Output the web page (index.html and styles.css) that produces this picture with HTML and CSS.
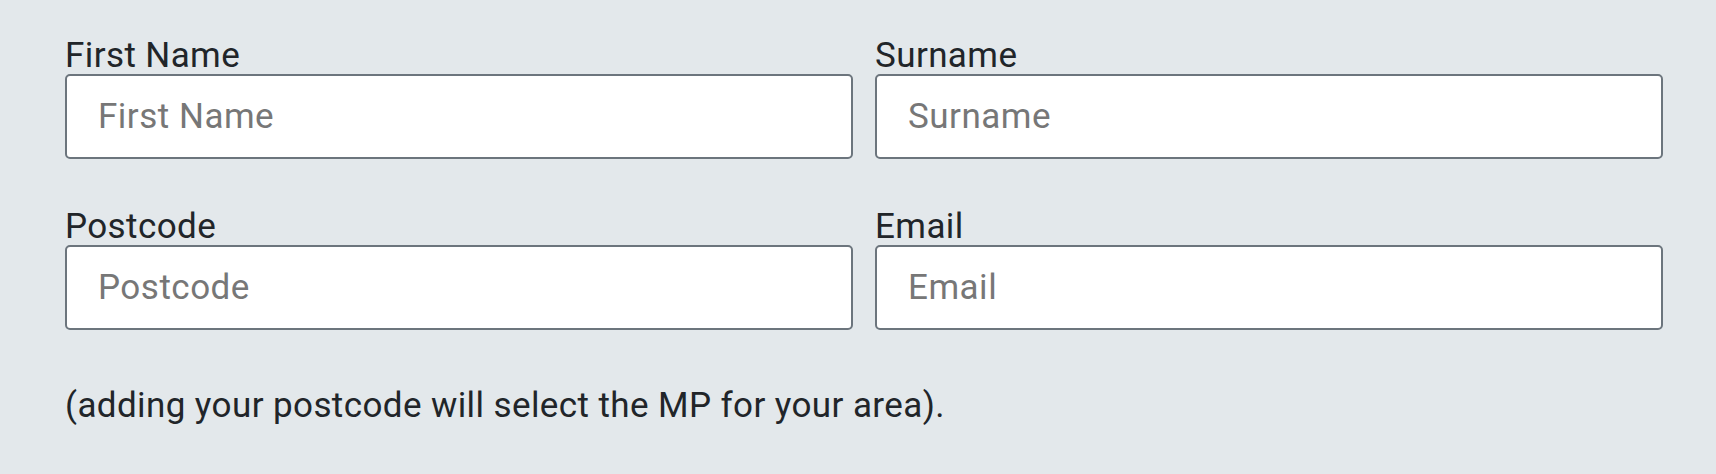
FILE: index.html
```html
<!DOCTYPE html>
<html>
<head>
  <title>Contact your MP</title>
  <link rel="stylesheet" href="styles.css">
</head>
<body>
  <div class="container">
    <div class="form-row">
      <div class="form-group">
        <label for="firstname">First Name</label>
        <input type="text" id="firstname" placeholder="First Name">
      </div>
      <div class="form-group">
        <label for="surname">Surname</label>
        <input type="text" id="surname" placeholder="Surname">
      </div>
    </div>
    <div class="form-row">
      <div class="form-group">
        <label for="postcode">Postcode</label>
        <input type="text" id="postcode" placeholder="Postcode">
      </div>
      <div class="form-group">
        <label for="email">Email</label>
        <input type="text" id="email" placeholder="Email">
      </div>
    </div>
    <p class="help-text">(adding your postcode will select the MP for your area).</p>
  </div>
</body>
</html>
```

FILE: styles.css
```css
body {
  font-family: Roboto, "Liberation Sans", sans-serif;
  background-color: #e3e8eb;
  color: #212529;
  margin: 0;
  padding: 0;
}

.container {
  padding: 37px 53px 0 65px;
}

.form-row {
  display: grid;
  grid-template-columns: 1fr 1fr;
  column-gap: 22px;
  margin-bottom: 49px;
}

.form-group label {
  display: block;
  font-size: 35px;
  line-height: 37px;
  letter-spacing: 0.4px;
}

.form-group input[type="text"] {
  display: block;
  box-sizing: border-box;
  width: 100%;
  height: 85px;
  padding: 0 31px;
  font-family: inherit;
  font-size: 35px;
  letter-spacing: 0.5px;
  color: #212529;
  background-color: #fff;
  border: 2px solid #6c757d;
  border-radius: 5px;
}

.form-group input::placeholder {
  color: #777;
}

.help-text {
  margin: 56px 0 0;
  font-size: 35px;
  line-height: 40px;
  letter-spacing: 0.4px;
}
```
